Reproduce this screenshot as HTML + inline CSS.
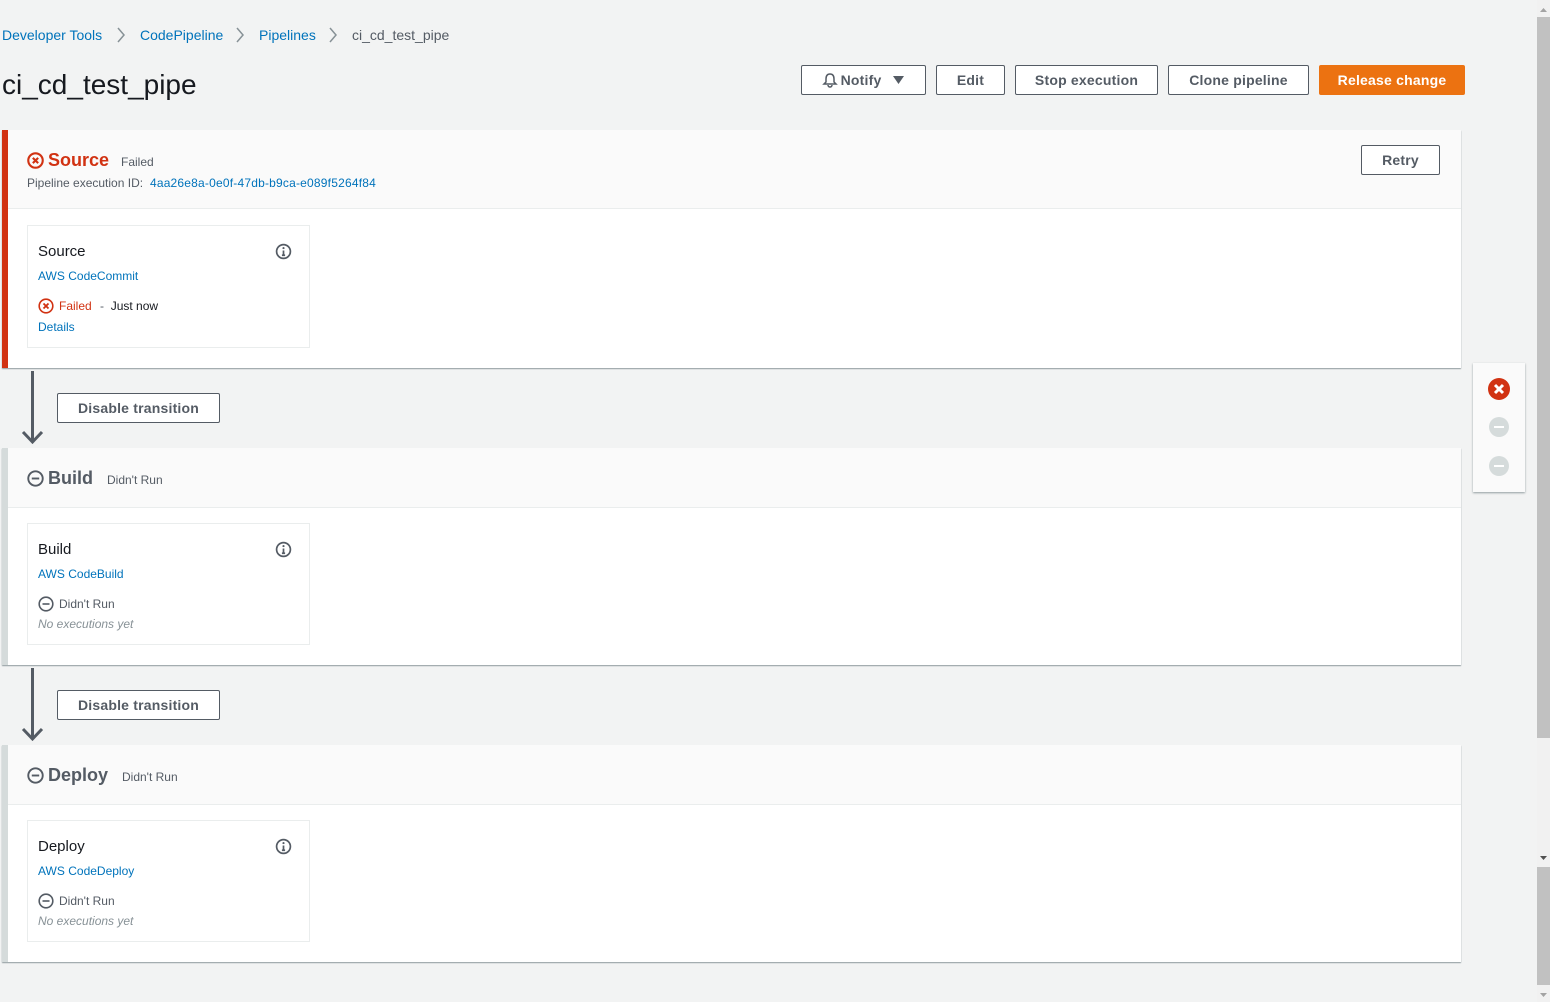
<!DOCTYPE html>
<html><head><meta charset="utf-8"><style>
*{box-sizing:border-box;margin:0;padding:0}
body{width:1550px;height:1002px;background:#f2f3f3;font-family:"Liberation Sans",sans-serif;color:#16191f;position:relative;overflow:hidden}
.a{position:absolute;white-space:nowrap}
.lk{color:#0073bb}
.btn{position:absolute;height:30px;border:1px solid #545b64;border-radius:2px;background:#fff;color:#545b64;font-weight:bold;font-size:14px;display:flex;align-items:center;justify-content:center;letter-spacing:.2px}
.stage{position:absolute;left:2px;width:1459px;background:#fff;box-shadow:0 1px 1px rgba(0,28,36,.4);border-left:6px solid #d5dbdb}
.sh{height:79px;background:#fafafa;border-bottom:1px solid #eaeded;position:relative}
.card{position:absolute;left:19px;top:95px;width:283px;height:123px;border:1px solid #eaeded;background:#fff}
.ct{position:absolute;left:10px;top:17px;font-size:15px;color:#16191f}
.cl{position:absolute;left:10px;top:43px;font-size:12px;color:#0073bb}
.cs{position:absolute;left:10px;top:72px;font-size:12px;color:#545b64;display:flex;align-items:center;gap:5px}
.ne{position:absolute;left:10px;top:93px;font-size:12px;font-style:italic;color:#879196}
.info{position:absolute;left:247px;top:17px}
</style></head><body>
<div class="a" style="left:2px;top:27px;font-size:14px"><span class="lk">Developer Tools</span></div>
<div class="a" style="left:140px;top:27px;font-size:14px" ><span class="lk">CodePipeline</span></div>
<div class="a" style="left:259px;top:27px;font-size:14px"><span style="color:#0073bb">Pipelines</span></div>
<div class="a" style="left:352px;top:27px;font-size:14px;color:#545b64">ci_cd_test_pipe</div>
<svg class="a" style="left:116px;top:27px" width="250" height="16"><g fill="none" stroke="#879196" stroke-width="1.5"><path d="M2 1l6 7-6 7"/><path d="M121 1l6 7-6 7"/><path d="M214 1l6 7-6 7"/></g></svg>
<div class="a" style="left:2px;top:69px;font-size:28px;color:#16191f">ci_cd_test_pipe</div>

<div class="btn" style="left:801px;top:65px;width:125px"><svg width="16" height="16" viewBox="0 0 16 16" style="margin-right:3px"><path d="M8 2c-3 0-4 2-4 5v3l-2 2h12l-2-2V7c0-3-1-5-4-5zM6 13a2 2 0 004 0" fill="none" stroke="#545b64" stroke-width="1.5"/></svg>Notify<svg width="12" height="10" style="margin-left:12px"><path d="M0 1h11L5.5 9z" fill="#545b64"/></svg></div>
<div class="btn" style="left:936px;top:65px;width:69px">Edit</div>
<div class="btn" style="left:1015px;top:65px;width:143px">Stop execution</div>
<div class="btn" style="left:1168px;top:65px;width:141px">Clone pipeline</div>
<div class="btn" style="left:1319px;top:65px;width:146px;background:#ec7211;border-color:#ec7211;color:#fff">Release change</div>

<!-- Source -->
<div class="stage" style="top:130px;height:238px;border-left-color:#d13212">
 <div class="sh">
  <svg class="a" style="left:19px;top:22px" width="17" height="17" viewBox="0 0 16 16"><circle cx="8" cy="8" r="6.8" fill="none" stroke="#d13212" stroke-width="2"/><path d="M5.5 5.5l5 5M10.5 5.5l-5 5" stroke="#d13212" stroke-width="2"/></svg>
  <div class="a" style="left:40px;top:20px;font-size:18px;font-weight:bold;color:#d13212">Source</div>
  <div class="a" style="left:113px;top:25px;font-size:12px;color:#545b64">Failed</div>
  <div class="a" style="left:19px;top:46px;font-size:12px;color:#545b64">Pipeline execution ID: <span class="lk" style="letter-spacing:.2px">&nbsp;4aa26e8a-0e0f-47db-b9ca-e089f5264f84</span></div>
  <div class="btn" style="left:1353px;top:15px;width:79px">Retry</div>
 </div>
 <div class="card" style="top:95px;height:123px">
  <div class="ct">Source</div>
  <svg class="info" width="17" height="17" viewBox="0 0 16 16"><circle cx="8" cy="8" r="6.5" fill="none" stroke="#545b64" stroke-width="1.6"/><path d="M8 7v4.5M6.5 11.5h3" stroke="#545b64" stroke-width="1.6"/><circle cx="8" cy="4.8" r="1" fill="#545b64"/></svg>
  <div class="cl">AWS CodeCommit</div>
  <div class="cs"><svg width="16" height="16" viewBox="0 0 16 16"><circle cx="8" cy="8" r="6.8" fill="none" stroke="#d13212" stroke-width="1.6"/><path d="M5.5 5.5l5 5M10.5 5.5l-5 5" stroke="#d13212" stroke-width="1.8"/></svg><span style="color:#d13212">Failed</span> <span>&nbsp;-&nbsp; <span style="color:#16191f">Just now</span></span></div>
  <div class="cl" style="top:94px">Details</div>
 </div>
</div>

<svg class="a" style="left:20px;top:370px" width="30" height="76"><path d="M12.5 1v71M3 62l9.5 10 9.5-10" fill="none" stroke="#545b64" stroke-width="3"/></svg>
<div class="btn" style="left:57px;top:393px;width:163px">Disable transition</div>

<!-- Build -->
<div class="stage" style="top:448px;height:217px">
 <div class="sh" style="height:60px">
  <svg class="a" style="left:19px;top:22px" width="17" height="17" viewBox="0 0 16 16"><circle cx="8" cy="8" r="6.8" fill="none" stroke="#545b64" stroke-width="1.8"/><path d="M4.5 8h7" stroke="#545b64" stroke-width="1.8"/></svg>
  <div class="a" style="left:40px;top:20px;font-size:18px;font-weight:bold;color:#545b64">Build</div>
  <div class="a" style="left:99px;top:25px;font-size:12px;color:#545b64">Didn't Run</div>
 </div>
 <div class="card" style="top:75px;height:122px">
  <div class="ct">Build</div>
  <svg class="info" width="17" height="17" viewBox="0 0 16 16"><circle cx="8" cy="8" r="6.5" fill="none" stroke="#545b64" stroke-width="1.6"/><path d="M8 7v4.5M6.5 11.5h3" stroke="#545b64" stroke-width="1.6"/><circle cx="8" cy="4.8" r="1" fill="#545b64"/></svg>
  <div class="cl">AWS CodeBuild</div>
  <div class="cs"><svg width="16" height="16" viewBox="0 0 16 16"><circle cx="8" cy="8" r="6.8" fill="none" stroke="#545b64" stroke-width="1.6"/><path d="M4.5 8h7" stroke="#545b64" stroke-width="1.6"/></svg>Didn't Run</div>
  <div class="ne">No executions yet</div>
 </div>
</div>

<svg class="a" style="left:20px;top:667px" width="30" height="76"><path d="M12.5 1v71M3 62l9.5 10 9.5-10" fill="none" stroke="#545b64" stroke-width="3"/></svg>
<div class="btn" style="left:57px;top:690px;width:163px">Disable transition</div>

<!-- Deploy -->
<div class="stage" style="top:745px;height:217px">
 <div class="sh" style="height:60px">
  <svg class="a" style="left:19px;top:22px" width="17" height="17" viewBox="0 0 16 16"><circle cx="8" cy="8" r="6.8" fill="none" stroke="#545b64" stroke-width="1.8"/><path d="M4.5 8h7" stroke="#545b64" stroke-width="1.8"/></svg>
  <div class="a" style="left:40px;top:20px;font-size:18px;font-weight:bold;color:#545b64">Deploy</div>
  <div class="a" style="left:114px;top:25px;font-size:12px;color:#545b64">Didn't Run</div>
 </div>
 <div class="card" style="top:75px;height:122px">
  <div class="ct">Deploy</div>
  <svg class="info" width="17" height="17" viewBox="0 0 16 16"><circle cx="8" cy="8" r="6.5" fill="none" stroke="#545b64" stroke-width="1.6"/><path d="M8 7v4.5M6.5 11.5h3" stroke="#545b64" stroke-width="1.6"/><circle cx="8" cy="4.8" r="1" fill="#545b64"/></svg>
  <div class="cl">AWS CodeDeploy</div>
  <div class="cs"><svg width="16" height="16" viewBox="0 0 16 16"><circle cx="8" cy="8" r="6.8" fill="none" stroke="#545b64" stroke-width="1.6"/><path d="M4.5 8h7" stroke="#545b64" stroke-width="1.6"/></svg>Didn't Run</div>
  <div class="ne">No executions yet</div>
 </div>
</div>

<!-- side panel -->
<div class="a" style="left:1473px;top:363px;width:52px;height:129px;background:#fafafa;box-shadow:0 1px 2px rgba(0,28,36,.4)">
 <svg class="a" style="left:15px;top:15px" width="22" height="22"><circle cx="11" cy="11" r="11" fill="#d13212"/><path d="M7 7l8 8M15 7l-8 8" stroke="#fff" stroke-width="3"/></svg>
 <svg class="a" style="left:16px;top:54px" width="20" height="20"><circle cx="10" cy="10" r="10" fill="#d5dbdb"/><path d="M5 10h10" stroke="#fff" stroke-width="2"/></svg>
 <svg class="a" style="left:16px;top:93px" width="20" height="20"><circle cx="10" cy="10" r="10" fill="#d5dbdb"/><path d="M5 10h10" stroke="#fff" stroke-width="2"/></svg>
</div>

<!-- scrollbar -->
<div class="a" style="left:1537px;top:0;width:13px;height:1002px;background:#f1f1f1"></div>
<div class="a" style="left:1537px;top:17px;width:13px;height:721px;background:#c1c1c1"></div>
<div class="a" style="left:1537px;top:867px;width:13px;height:118px;background:#c1c1c1"></div>
<svg class="a" style="left:1537px;top:4px" width="13" height="10"><path d="M3 8h7L6.5 4z" fill="#a3a3a3"/></svg>
<svg class="a" style="left:1537px;top:853px" width="13" height="10"><path d="M3 3h7L6.5 7z" fill="#505050"/></svg>
<svg class="a" style="left:1537px;top:990px" width="13" height="10"><path d="M3 3h7L6.5 7z" fill="#a3a3a3"/></svg>
</body></html>
